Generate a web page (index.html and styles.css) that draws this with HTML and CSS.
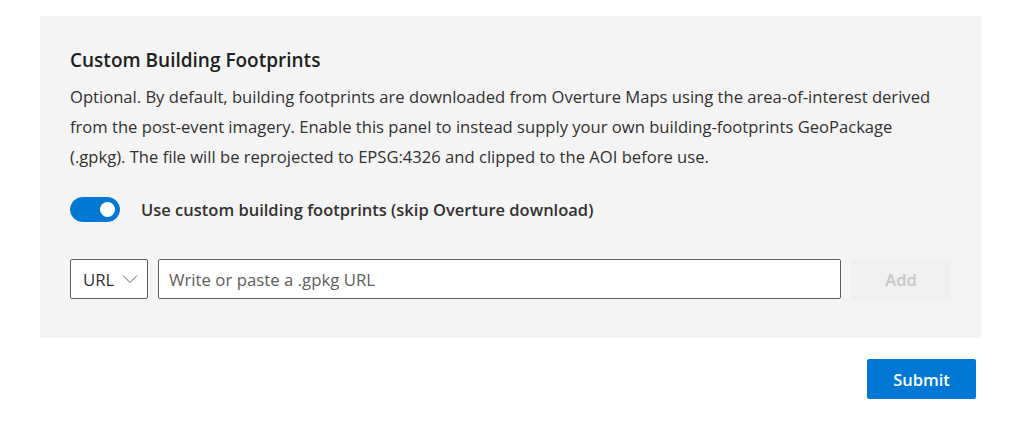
FILE: index.html
```html
<!DOCTYPE html>
<html lang="en">

<head>
    <meta charset="UTF-8">
    <meta name="viewport" content="width=device-width, initial-scale=1.0">
    <title>Custom Building Footprints</title>

    <link rel="stylesheet" href="styles.css">
</head>

<body>
    <div class="page">
        <div class="panel">
            <h2 class="panel-title">Custom Building Footprints</h2>
            <p class="panel-text">Optional. By default, building footprints are downloaded from Overture Maps using the area-of-interest derived from the post-event imagery. Enable this panel to instead supply your own building-footprints GeoPackage (.gpkg). The file will be reprojected to EPSG:4326 and clipped to the AOI before use.</p>

            <label class="toggle-row">
                <span class="toggle on" id="customToggle" onclick="toggleSwitch()">
                    <span class="thumb"></span>
                </span>
                <span class="toggle-label">Use custom building footprints (skip Overture download)</span>
            </label>

            <div class="source-row">
                <div class="dropdown">
                    <span>URL</span>
                    <svg width="16" height="10" viewBox="0 0 16 10">
                        <path d="M1 1.5 L8 8.5 L15 1.5" fill="none" stroke="#605e5c" stroke-width="1" />
                    </svg>
                </div>
                <input type="text" class="url-input" placeholder="Write or paste a .gpkg URL">
                <button class="add-btn" disabled>Add</button>
            </div>
        </div>

        <div class="actions">
            <button class="submit-btn">Submit</button>
        </div>
    </div>

    <script>
        function toggleSwitch() {
            document.getElementById('customToggle').classList.toggle('on');
        }
    </script>
</body>

</html>
```

FILE: styles.css
```css
body {
    font-family: "Open Sans", "Noto Sans", Arial, sans-serif;
    margin: 0;
    padding: 0;
    background-color: #fff;
    color: #323130;
}

.page {
    width: 941px;
    padding: 16px 0 0 40px;
}

.panel {
    background-color: #f4f4f4;
    padding: 32px 30px 39px 30px;
}

.panel-title {
    margin: 0;
    font-size: 19px;
    font-weight: 600;
    line-height: 24px;
    color: #201f1e;
}

.panel-text {
    margin: 10px 0 0 0;
    font-size: 16.6px;
    line-height: 30px;
}

.toggle-row {
    display: flex;
    align-items: center;
    margin-top: 25px;
    cursor: pointer;
}

.toggle {
    position: relative;
    width: 50px;
    height: 25px;
    border-radius: 13px;
    border: 1px solid #605e5c;
    box-sizing: border-box;
    background-color: #fff;
}

.toggle .thumb {
    position: absolute;
    top: 4px;
    left: 5px;
    width: 15px;
    height: 15px;
    border-radius: 50%;
    background-color: #605e5c;
}

.toggle.on {
    background-color: #0078d4;
    border-color: #0078d4;
}

.toggle.on .thumb {
    left: auto;
    right: 4px;
    background-color: #fff;
}

.toggle-label {
    margin-left: 21px;
    font-size: 16.5px;
    font-weight: 600;
}

.source-row {
    display: flex;
    gap: 10px;
    margin-top: 37px;
    height: 40px;
}

.dropdown {
    display: flex;
    align-items: center;
    justify-content: space-between;
    width: 78px;
    box-sizing: border-box;
    padding: 0 9px 0 12px;
    background: #fff;
    border: 1px solid #605e5c;
    border-radius: 2px;
    font-size: 16.8px;
}

.url-input {
    flex: 1;
    box-sizing: border-box;
    padding: 0 10px;
    border: 1px solid #605e5c;
    border-radius: 2px;
    font-family: inherit;
    font-size: 16.8px;
    color: #323130;
}

.url-input::placeholder {
    color: #605e5c;
}

.add-btn {
    width: 100px;
    border: none;
    border-radius: 2px;
    background-color: #f0f0f0;
    color: #c8c6c4;
    font-family: inherit;
    font-size: 16.5px;
    font-weight: 600;
}

.actions {
    display: flex;
    justify-content: flex-end;
    margin-top: 21px;
    padding-right: 5px;
}

.submit-btn {
    width: 109px;
    height: 40px;
    border: none;
    border-radius: 2px;
    background-color: #0078d4;
    color: #fff;
    font-family: inherit;
    font-size: 16.5px;
    font-weight: 600;
    cursor: pointer;
}

.submit-btn:hover {
    background-color: #106ebe;
}
```
